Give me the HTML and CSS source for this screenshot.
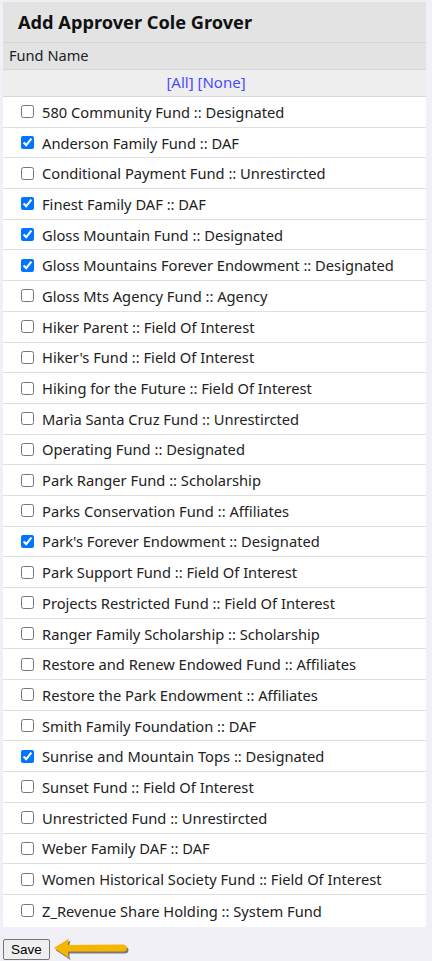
FILE: index.html
```html
<!DOCTYPE html>
<html lang="en">
<head>
<meta charset="UTF-8">
<meta name="viewport" content="width=device-width, initial-scale=1.0">
<title>Add Approver</title>
<link rel="stylesheet" href="styles.css">
</head>
<body>

<div class="panel">
  <h1 class="panel-title">Add Approver Cole Grover</h1>
  <div class="col-head">Fund Name</div>
  <div class="select-links"><a href="#">[All]</a> <a href="#">[None]</a></div>
  <ul class="fund-list">
    <li><label><input type="checkbox"> 580 Community Fund :: Designated</label></li>
    <li><label><input type="checkbox" checked> Anderson Family Fund :: DAF</label></li>
    <li><label><input type="checkbox"> Conditional Payment Fund :: Unrestircted</label></li>
    <li><label><input type="checkbox" checked> Finest Family DAF :: DAF</label></li>
    <li><label><input type="checkbox" checked> Gloss Mountain Fund :: Designated</label></li>
    <li><label><input type="checkbox" checked> Gloss Mountains Forever Endowment :: Designated</label></li>
    <li><label><input type="checkbox"> Gloss Mts Agency Fund :: Agency</label></li>
    <li><label><input type="checkbox"> Hiker Parent :: Field Of Interest</label></li>
    <li><label><input type="checkbox"> Hiker's Fund :: Field Of Interest</label></li>
    <li><label><input type="checkbox"> Hiking for the Future :: Field Of Interest</label></li>
    <li><label><input type="checkbox"> Marìa Santa Cruz Fund :: Unrestircted</label></li>
    <li><label><input type="checkbox"> Operating Fund :: Designated</label></li>
    <li><label><input type="checkbox"> Park Ranger Fund :: Scholarship</label></li>
    <li><label><input type="checkbox"> Parks Conservation Fund :: Affiliates</label></li>
    <li><label><input type="checkbox" checked> Park's Forever Endowment :: Designated</label></li>
    <li><label><input type="checkbox"> Park Support Fund :: Field Of Interest</label></li>
    <li><label><input type="checkbox"> Projects Restricted Fund :: Field Of Interest</label></li>
    <li><label><input type="checkbox"> Ranger Family Scholarship :: Scholarship</label></li>
    <li><label><input type="checkbox"> Restore and Renew Endowed Fund :: Affiliates</label></li>
    <li><label><input type="checkbox"> Restore the Park Endowment :: Affiliates</label></li>
    <li><label><input type="checkbox"> Smith Family Foundation :: DAF</label></li>
    <li><label><input type="checkbox" checked> Sunrise and Mountain Tops :: Designated</label></li>
    <li><label><input type="checkbox"> Sunset Fund :: Field Of Interest</label></li>
    <li><label><input type="checkbox"> Unrestricted Fund :: Unrestircted</label></li>
    <li><label><input type="checkbox"> Weber Family DAF :: DAF</label></li>
    <li><label><input type="checkbox"> Women Historical Society Fund :: Field Of Interest</label></li>
    <li><label><input type="checkbox"> Z_Revenue Share Holding :: System Fund</label></li>
  </ul>
</div>

<div class="actions">
  <button type="button" class="save-btn">Save</button>
  <!-- pointer arrow -->
  <svg class="arrow" width="80" height="28" viewBox="0 0 80 28">
    <path d="M2 12 L17 2.5 Q15.5 6 16 9 L71 8.5 Q75 9 75 12 Q75 15.5 71 15.5 L16 15.5 Q15.5 18.5 17 22 Z" fill="#2a2a2a" opacity="0.6" transform="translate(1.5,2)"/>
    <path d="M2 12 L17 2.5 Q15.5 6 16 9 L71 8.5 Q75 9 75 12 Q75 15.5 71 15.5 L16 15.5 Q15.5 18.5 17 22 Z" fill="#f7b500"/>
  </svg>
</div>

</body>
</html>
```

FILE: styles.css
```css
body {
  font-family: "Noto Sans", "Open Sans", sans-serif;
  background-color: #f0f0f6;
  margin: 0;
  padding: 2px 6px 0 3px;
  color: #222;
}
.panel {
  background-color: #fff;
}
.panel-title {
  margin: 0;
  background-color: #e3e3e3;
  font-size: 18.2px;
  font-weight: bold;
  color: #111;
  height: 40px;
  line-height: 40px;
  padding-left: 15px;
  border-bottom: 1px solid #d4d4d4;
}
.col-head {
  background-color: #e3e3e3;
  font-size: 14.6px;
  height: 26px;
  line-height: 25px;
  padding-left: 6px;
  border-bottom: 1px solid #d6d6d6;
}
.select-links {
  background-color: #eeeeee;
  text-align: center;
  font-size: 15px;
  height: 26px;
  line-height: 25px;
  padding-right: 17px;
  border-bottom: 1px solid #d6d6d6;
}
.select-links a {
  color: #4a4aff;
  text-decoration: none;
}
.fund-list {
  list-style: none;
  margin: 0;
  padding: 0;
}
.fund-list li {
  height: 29.7px;
  border-bottom: 1px solid #e0e0e0;
  font-size: 14.7px;
  display: flex;
  align-items: center;
  padding-left: 18px;
}
.fund-list li:last-child {
  border-bottom: none;
  height: 32px;
}
.fund-list label {
  display: flex;
  align-items: center;
  gap: 8px;
}
.fund-list input {
  width: 13px;
  height: 13px;
  margin: 0;
}
.actions {
  display: flex;
  align-items: center;
  padding-top: 9px;
  gap: 2px;
}
.save-btn {
  font-family: Arial, "Liberation Sans", sans-serif;
  font-size: 13.5px;
  padding: 1px 7px;
  height: 21px;
  background-color: #efefef;
  border: 1px solid #767676;
  border-radius: 2px;
  color: #000;
}
.arrow {
  display: block;
}
```
